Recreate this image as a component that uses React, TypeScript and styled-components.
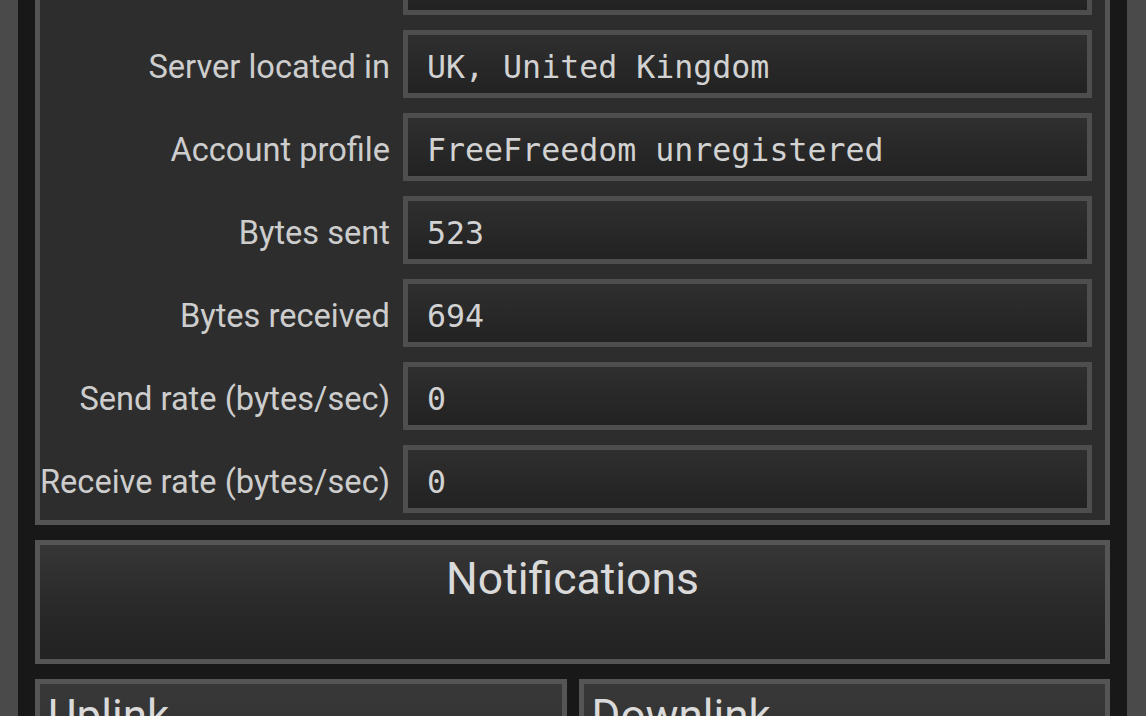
import styled, { createGlobalStyle } from 'styled-components';

const GlobalStyle = createGlobalStyle`
  html, body {
    margin: 0;
    padding: 0;
    background: #4a4a4a;
    overflow: hidden;
  }
  body {
    font-family: Roboto, 'Liberation Sans', sans-serif;
  }
`;

const Screen = styled.div`
  width: 1146px;
  height: 716px;
  overflow: hidden;
  background: #4a4a4a;
`;

const Page = styled.div`
  margin-left: 18px;
  width: 1109px;
  min-height: 100%;
  box-sizing: border-box;
  background: #181818;
  padding: 0 17px 0 17px;
  display: flex;
  flex-direction: column;
  gap: 15px;
`;

const InfoPanel = styled.div`
  margin-top: -65px;
  border: 5px solid #545454;
  background: #2d2d2d;
  padding: 7px 13px 7px 0;
  display: flex;
  flex-direction: column;
  gap: 15px;
`;

const Row = styled.div`
  display: grid;
  grid-template-columns: 350px 1fr;
  column-gap: 13px;
  align-items: center;
`;

const Label = styled.div`
  text-align: right;
  font-size: 32.6px;
  color: #cdcdcd;
  white-space: nowrap;
  padding-top: 5px;
`;

const Field = styled.div`
  height: 68px;
  box-sizing: border-box;
  border: 5px solid #4e4e4e;
  background: linear-gradient(180deg, #2f2f2f 0%, #272727 60%, #222222 100%);
  display: flex;
  align-items: center;
  padding: 5px 0 0 19px;
  font-family: 'DejaVu Sans Mono', 'Liberation Mono', monospace;
  font-size: 31.6px;
  color: #d2d2d2;
  white-space: nowrap;
`;

const NotifyButton = styled.div`
  height: 124px;
  box-sizing: border-box;
  border: 5px solid #555555;
  background: linear-gradient(180deg, #363636 0%, #2a2a2a 50%, #222222 100%);
  display: flex;
  justify-content: center;
  padding-top: 8px;
  font-size: 44.5px;
  color: #dadada;
`;

const LinkRow = styled.div`
  display: grid;
  grid-template-columns: 1fr 1fr;
  column-gap: 12px;
`;

const LinkBox = styled.div`
  height: 140px;
  box-sizing: border-box;
  border: 5px solid #555555;
  border-bottom: none;
  background: linear-gradient(180deg, #383838 0%, #2c2c2c 100%);
  padding: 6px 0 0 8px;
  font-size: 44px;
  color: #dadada;
`;

const rows: { label: string; value: string }[] = [
  { label: '', value: '' },
  { label: 'Server located in', value: 'UK, United Kingdom' },
  { label: 'Account profile', value: 'FreeFreedom unregistered' },
  { label: 'Bytes sent', value: '523' },
  { label: 'Bytes received', value: '694' },
  { label: 'Send rate (bytes/sec)', value: '0' },
  { label: 'Receive rate (bytes/sec)', value: '0' },
];

export default function App() {
  return (
    <Screen>
      <GlobalStyle />
      <Page>
        <InfoPanel>
          {rows.map((r, i) => (
            <Row key={i}>
              <Label>{r.label}</Label>
              <Field>{r.value}</Field>
            </Row>
          ))}
        </InfoPanel>
        <NotifyButton>Notifications</NotifyButton>
        <LinkRow>
          <LinkBox>Uplink</LinkBox>
          <LinkBox>Downlink</LinkBox>
        </LinkRow>
      </Page>
    </Screen>
  );
}
